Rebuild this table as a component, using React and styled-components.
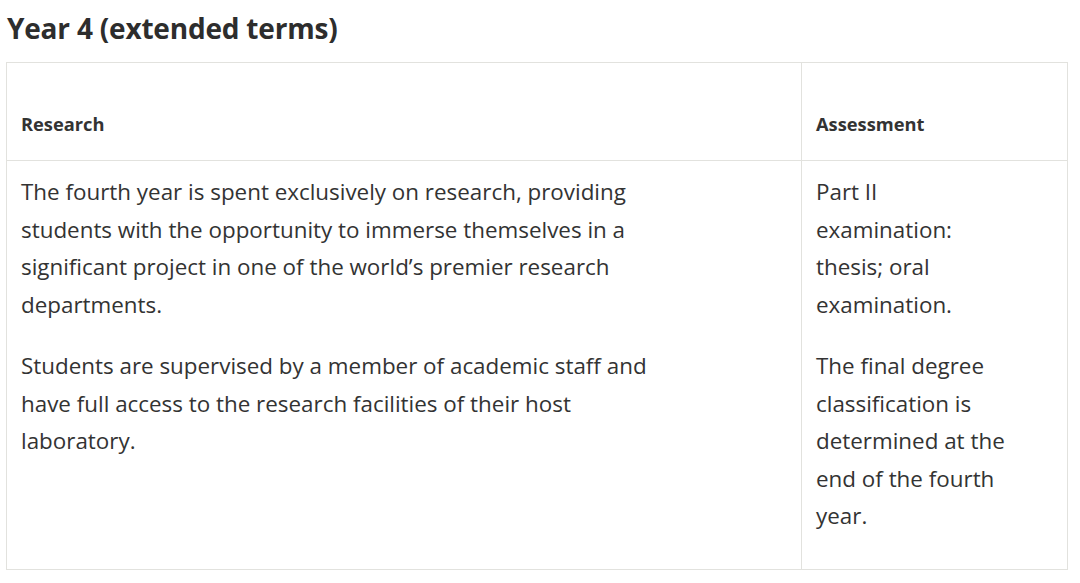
import styled, { createGlobalStyle } from 'styled-components';

const Global = createGlobalStyle`
  body {
    margin: 0;
    background: #fff;
    font-family: 'Open Sans', 'Noto Sans', sans-serif;
    color: #333;
  }
`;

const Section = styled.section`
  padding: 0 12px 0 6px;
`;

const Title = styled.h2`
  margin: 0;
  padding: 10px 0 0 1px;
  height: 62px;
  box-sizing: border-box;
  font-size: 28px;
  line-height: 36px;
  font-weight: 700;
  color: #2d2d2d;
  letter-spacing: -0.2px;
`;

const Table = styled.table`
  width: 100%;
  border-collapse: collapse;
  border: 1px solid #e2e2de;
`;

const Th = styled.th`
  text-align: left;
  vertical-align: bottom;
  padding: 48px 14px 24px;
  border: 1px solid #e2e2de;
  font-size: 18.3px;
  line-height: 25px;
  font-weight: 700;
  color: #333;
  width: ${(p) => p.$width || 'auto'};
`;

const Td = styled.td`
  vertical-align: top;
  padding: 12px ${(p) => p.$padRight || '14px'} 10px 14px;
  border: 1px solid #e2e2de;
`;

const Para = styled.p`
  margin: 0 0 24px;
  font-size: 22.4px;
  line-height: 37.5px;
  max-width: ${(p) => p.$max || 'none'};
`;

const App = () => (
  <>
    <Global />
    <Section>
      <Title>Year 4 (extended terms)</Title>
      <Table>
        <thead>
          <tr>
            <Th>Research</Th>
            <Th $width="237px">Assessment</Th>
          </tr>
        </thead>
        <tbody>
          <tr>
            <Td>
              <Para $max="650px">
                The fourth year is spent exclusively on research, providing students with the
                opportunity to immerse themselves in a significant project in one of the world’s
                premier research departments.
              </Para>
              <Para $max="650px">
                Students are supervised by a member of academic staff and have full access to the
                research facilities of their host laboratory.
              </Para>
            </Td>
            <Td $padRight="55px">
              <Para>Part II examination: thesis; oral examination.</Para>
              <Para>
                The final degree classification is determined at the end of the fourth year.
              </Para>
            </Td>
          </tr>
        </tbody>
      </Table>
    </Section>
  </>
);

export default App;
